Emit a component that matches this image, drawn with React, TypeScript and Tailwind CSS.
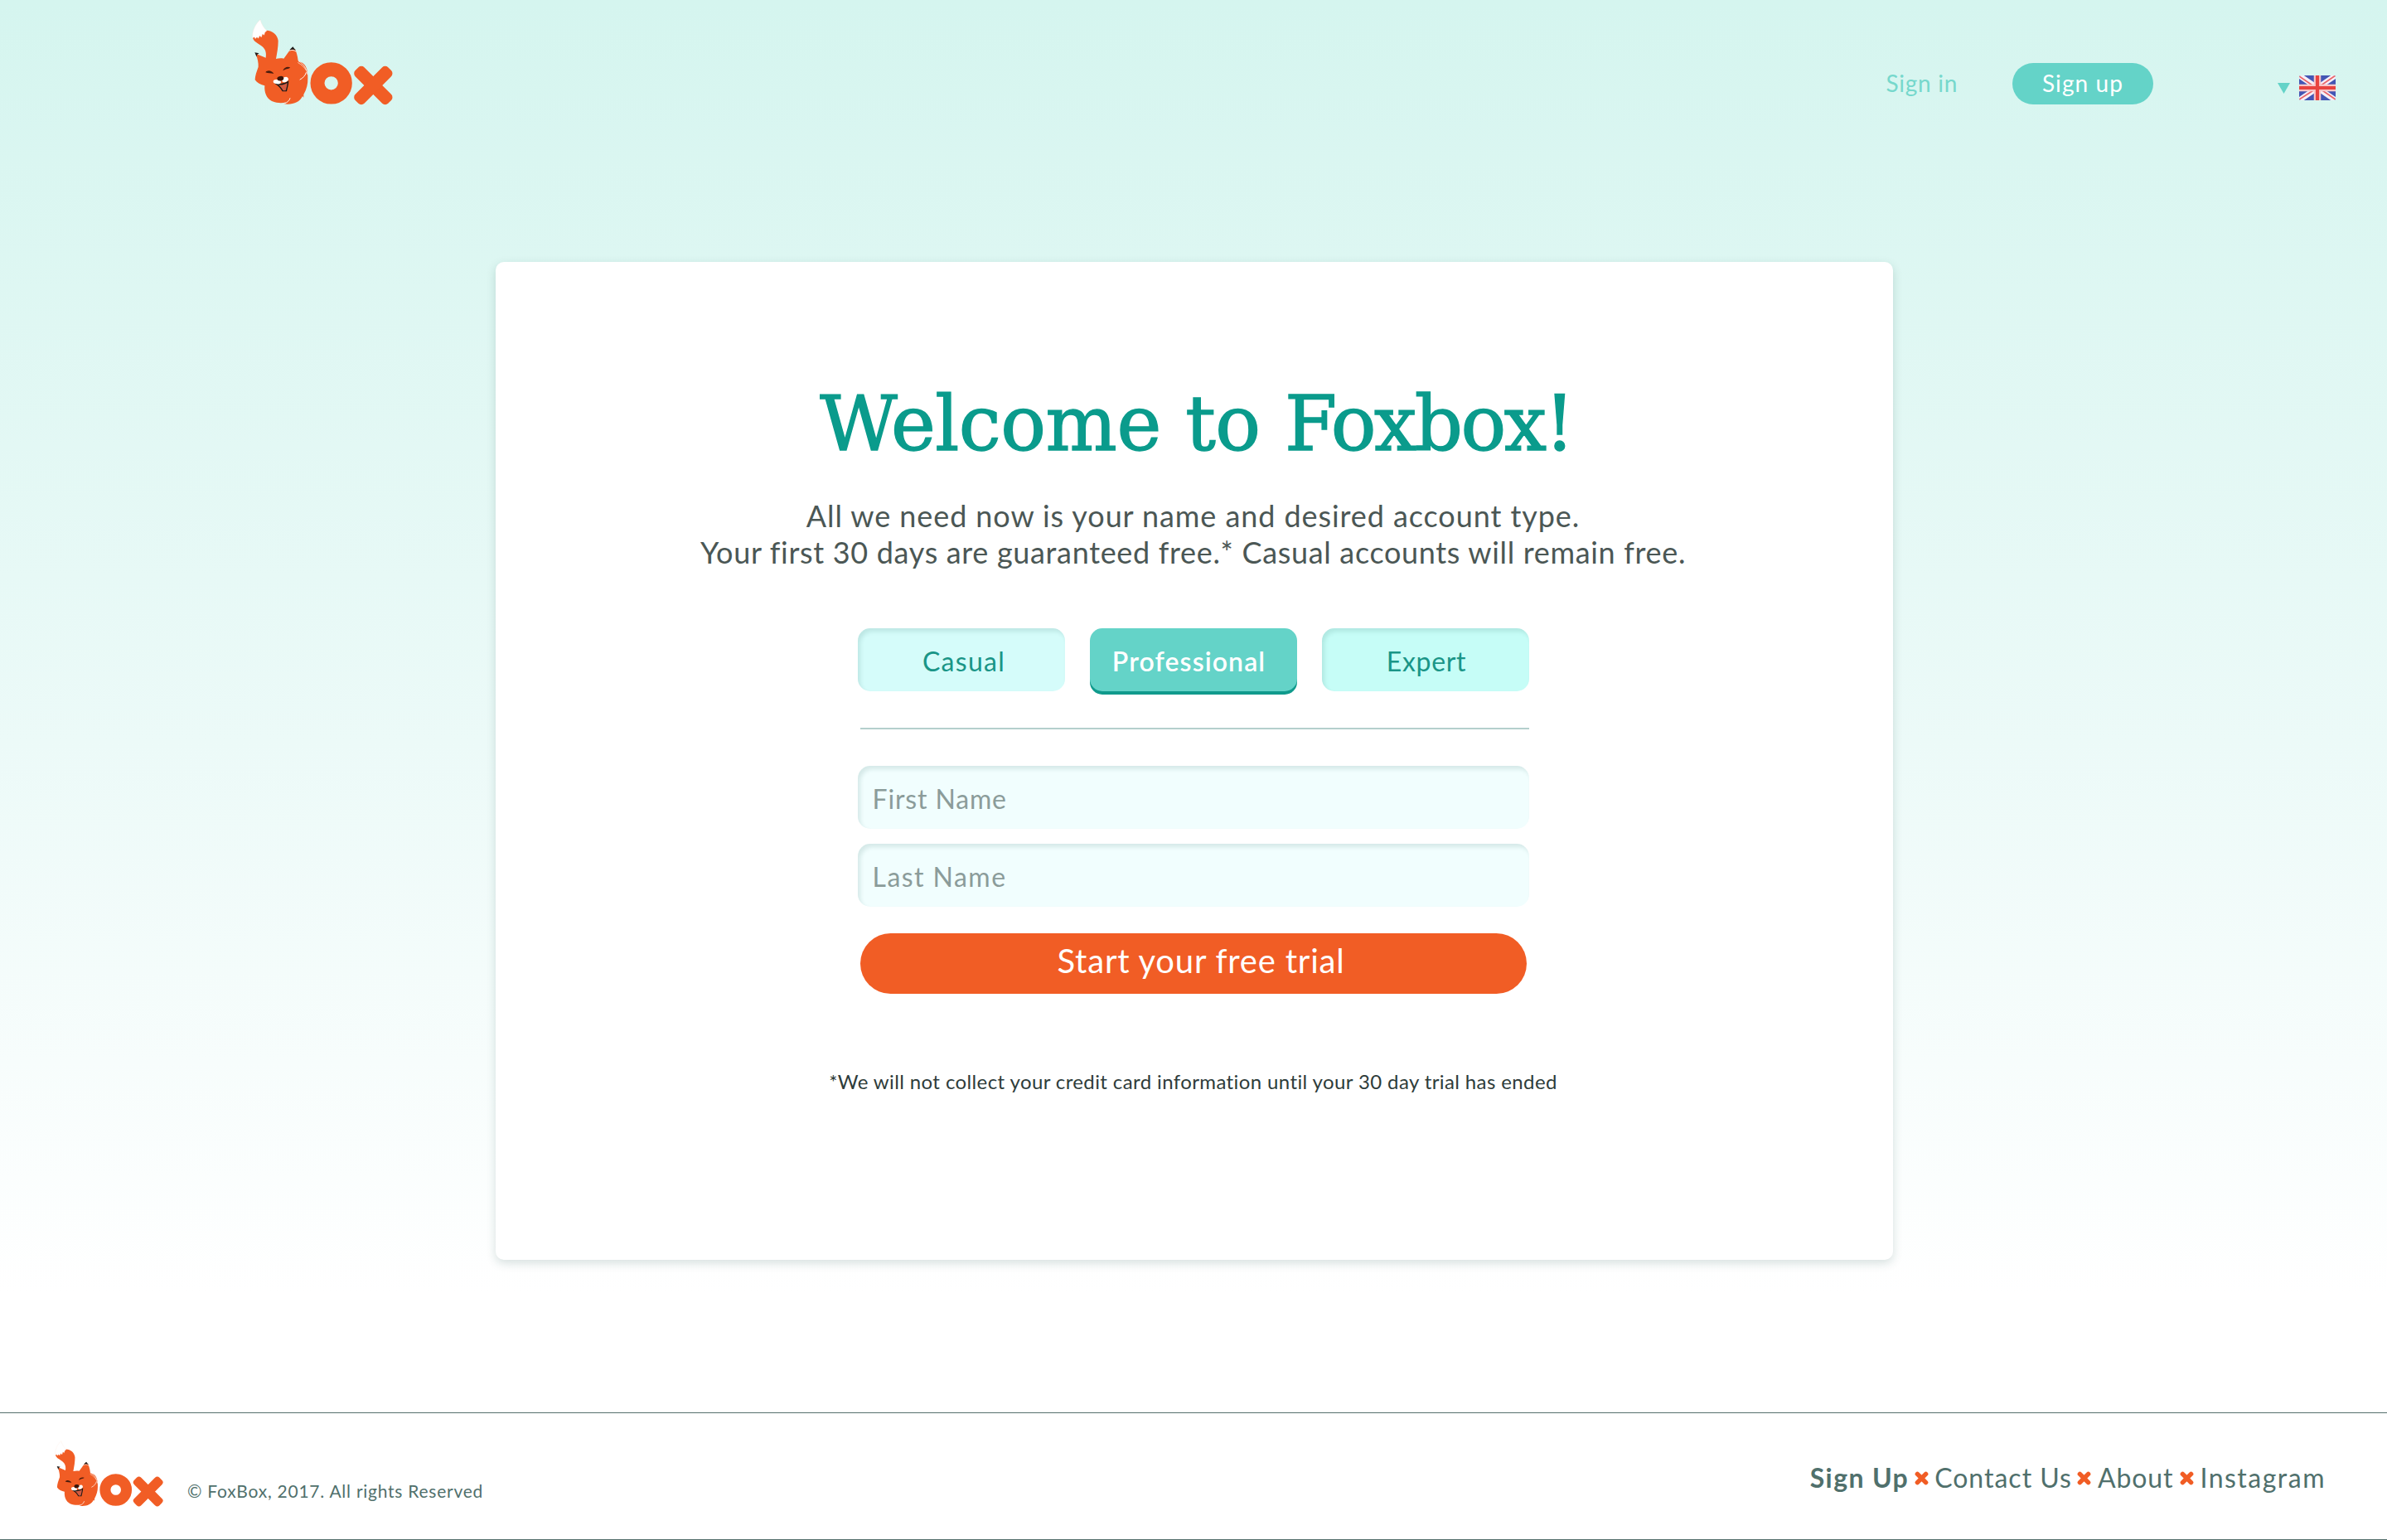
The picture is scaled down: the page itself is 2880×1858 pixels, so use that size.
function FoxLogo({ className }: { className: string }) {
  return (
    <svg viewBox="43 38 510 312" className={className} aria-label="Foxbox">
      {/* body and tail */}
      <path
        fill="#f15d25"
        d="M46 106C51 124 72 127 84 141C94 152 95 165 93 178L57 163C63 180 67 196 66 211C60 228 54 243 54 258C61 269 75 276 89 279C87 303 95 325 115 335C135 343 152 343 167 339L158 345C190 349 215 340 226 317L230 322L230 311C241 292 246 272 245 250C246 217 235 196 213 192L210 189C208 170 203 156 199 147L184 145L158 181C148 179 138 180 130 182C134 160 138 140 138 117C136 95 118 80 95 79Z"
      />
      {/* tail tip */}
      <path
        fill="#ffffff"
        stroke="#fbe3d8"
        strokeWidth="1"
        d="M73 40C54 58 43 82 45 107L51 102L55 109L61 103L66 108L71 98L77 104L81 92L87 96L90 86L97 80C85 70 77 55 73 40Z"
      />
      {/* fur lines */}
      <g fill="none" stroke="#fff4ee" strokeLinecap="round">
        <path strokeWidth="2.5" d="M213 191C231 201 241 219 244 238" />
        <path strokeWidth="2" d="M210 196C224 204 233 213 238 222" />
        <path strokeWidth="3" d="M239 232C236 243 228 251 217 257" />
        <path strokeWidth="3" d="M160 344C170 341 178 334 181 325" />
        <path strokeWidth="3" d="M180 152C187 149 195 150 201 154" />
      </g>
      {/* ears */}
      <path fill="#1d1a18" d="M53 159L69 162C63 164 60 168 60 175Z" />
      <path fill="#1d1a18" d="M191 138L202 152C195 147 187 147 179 150Z" />
      {/* eyes */}
      <path fill="#4a1c0d" d="M92 231C98 222 114 223 122 236C112 233 101 235 92 231Z" />
      <path fill="#4a1c0d" d="M155 225C159 213 171 209 181 213C180 219 167 217 155 225Z" />
      {/* mouth */}
      <path
        fill="#1d1a18"
        d="M122 270C135 274 165 272 176 260C176 276 171 289 169 300L153 300C147 290 140 280 122 270Z"
      />
      <path fill="#d25a41" d="M139 276C150 278 164 274 171 268C170 281 167 289 165 297L156 297C151 289 146 282 139 276Z" />
      <ellipse cx="134" cy="265" rx="14" ry="8" fill="#ffffff" transform="rotate(8 134 265)" />
      <ellipse cx="163" cy="257" rx="12" ry="9" fill="#ffffff" transform="rotate(-25 163 257)" />
      <ellipse cx="146" cy="253" rx="12" ry="8.500" fill="#3a1408" transform="rotate(-10 146 253)" />
      {/* ring and cross */}
      <circle cx="330" cy="270" r="50" fill="none" stroke="#f15d25" strokeWidth="51" />
      <g fill="#f15d25">
        <rect x="398" y="255" width="168" height="46" rx="15" transform="rotate(45 482 278)" />
        <rect x="398" y="255" width="168" height="46" rx="15" transform="rotate(-45 482 278)" />
      </g>
    </svg>
  );
}

function UkFlag() {
  return (
    <svg viewBox="0 0 44 30" className="h-[30px] w-[44px]" aria-label="English">
      <clipPath id="flag">
        <rect width="44" height="30" rx="2" />
      </clipPath>
      <g clipPath="url(#flag)">
        <rect width="44" height="30" fill="#4456b4" />
        <path d="M0 0L44 30M44 0L0 30" stroke="#f6f0f8" strokeWidth="6.500" />
        <path d="M0 1L22 16M44 0L22 15M22 15L0 29M22 14L44 29" stroke="#ea6468" strokeWidth="1.800" />
        <path d="M22 0V30M0 15H44" stroke="#f8c6c8" strokeWidth="8.500" />
        <path d="M22 0V30M0 15H44" stroke="#e8433f" strokeWidth="4.200" />
      </g>
    </svg>
  );
}

function Cross({ className }: { className: string }) {
  return (
    <svg viewBox="0 0 16 16" className={className}>
      <path d="M3.200 3.200L12.800 12.800M12.800 3.200L3.200 12.800" stroke="#f15d25" strokeWidth="5.200" strokeLinecap="round" />
    </svg>
  );
}

const inset = "shadow-[inset_3px_4px_5px_rgba(30,90,85,0.13)]";
const field =
  "block h-[76px] w-full rounded-[15px] bg-[#f1fefe] pt-[3px] pl-[18px] text-[32px] text-[#3c4a48] outline-none placeholder:text-[#8b9c9a] placeholder:opacity-100 " +
  inset;

export default function App() {
  return (
    <div className="flex h-[1858px] w-[2880px] flex-col overflow-hidden bg-white bg-linear-to-b from-[#d5f5ef] from-0% via-[#ecfaf8] via-48% to-white to-84% font-['Lato','Open_Sans',sans-serif]">
      <header className="flex h-[316px] shrink-0 items-start pl-[304px]">
        <FoxLogo className="mt-[23px] h-[104px] w-[170px]" />
        <nav className="mt-[76px] ml-auto flex h-[50px] items-center text-[28px]">
          <a className="pb-[2px] tracking-[0.700px] text-[#76d8cc]">Sign in</a>
          <a className="ml-[66px] flex h-[50px] w-[170px] items-center justify-center rounded-full bg-[#64d3c8] pb-[2px] tracking-[1.090px] text-white">
            Sign up
          </a>
        </nav>
        <button className="mt-[91px] mr-[62px] ml-[150px] flex items-center gap-[11px]">
          <svg viewBox="0 0 15 13" className="h-[13px] w-[15px]">
            <path d="M0 0H15L7.500 13Z" fill="#64d3c8" />
          </svg>
          <UkFlag />
        </button>
      </header>

      <main className="ml-[598px] flex h-[1204px] w-[1686px] shrink-0 flex-col items-center rounded-[10px] bg-white pt-[140px] pr-[3px] shadow-[0_4px_12px_rgba(20,70,65,0.17)]">
        <h1 className="pl-[8px] font-['DejaVu_Serif',serif] text-[91px] leading-[112px] tracking-[-0.500px] whitespace-nowrap text-[#0a9b8c] [word-spacing:1px] [-webkit-text-stroke:1.4px_#0a9b8c]">
          Welcome to <span className="tracking-[-2.500px]">Foxbox!</span>
        </h1>
        <p className="mt-[32px] text-center text-[36px] leading-[44px] whitespace-nowrap text-[#4b5755]">
          <span className="block tracking-[0.920px]">All we need now is your name and desired account type.</span>
          <span className="block tracking-[0.670px]">
            Your first 30 days are guaranteed free.* Casual accounts will remain free.
          </span>
        </p>

        <form className="mt-[70px] w-[810px]">
          <div className="grid grid-cols-3 gap-[30px] text-[32px] text-[#1a9587]">
            <button type="button" className={"h-[76px] rounded-[15px] bg-[#d5fcfa] pt-[3px] pl-[7px] tracking-[1.300px] " + inset}>
              Casual
            </button>
            <button
              type="button"
              className="h-[76px] rounded-[15px] bg-[#64d3c8] pt-[3px] pr-[10px] font-semibold tracking-[1.100px] text-white shadow-[0_4px_0_#109a8c]"
            >
              Professional
            </button>
            <button type="button" className={"h-[76px] rounded-[15px] bg-[#c6fdf7] pt-[3px] pl-[3px] tracking-[0.700px] " + inset}>
              Expert
            </button>
          </div>
          <hr className="mt-[44px] ml-[3px] h-[2px] border-0 bg-[#b4cfcd]" />
          <input className={field + " mt-[44px] tracking-[0.850px]"} placeholder="First Name" />
          <input className={field + " mt-[18px] tracking-[1.450px]"} placeholder="Last Name" />
          <button
            type="button"
            className="mt-[32px] ml-[3px] block h-[73px] w-[804px] rounded-full bg-[#f15d25] pb-[8px] pl-[19px] text-[40px] leading-[60px] tracking-[0.800px] text-white"
          >
            Start your free trial
          </button>
        </form>

        <p className="mt-[91px] text-[24px] leading-[30px] tracking-[0.390px] whitespace-nowrap text-[#2e3c3a]">
          *We will not collect your credit card information until your 30 day trial has ended
        </p>
      </main>

      <footer className="mt-auto flex h-[154px] shrink-0 items-start border-y border-[#56706d] bg-white text-[#50706c]">
        <FoxLogo className="mt-[33px] ml-[66px] h-[80px] w-[131px]" />
        <p className="mt-[80px] ml-[29px] text-[21px] leading-[28px] tracking-[0.750px] whitespace-nowrap">
          © FoxBox, 2017. All rights Reserved
        </p>
        <nav className="mt-[58px] mr-[74px] ml-auto flex items-center text-[32px] leading-[40px] whitespace-nowrap">
          <a className="font-bold tracking-[1.380px]">Sign Up</a>
          <Cross className="mt-[1px] mr-[7px] ml-[7px] size-[17px]" />
          <a className="tracking-[1px]">Contact Us</a>
          <Cross className="mt-[1px] mr-[8px] ml-[6px] size-[17px]" />
          <a className="tracking-[0.900px]">About</a>
          <Cross className="mt-[1px] mr-[7px] ml-[8px] size-[17px]" />
          <a className="tracking-[1.500px]">Instagram</a>
        </nav>
      </footer>
    </div>
  );
}
